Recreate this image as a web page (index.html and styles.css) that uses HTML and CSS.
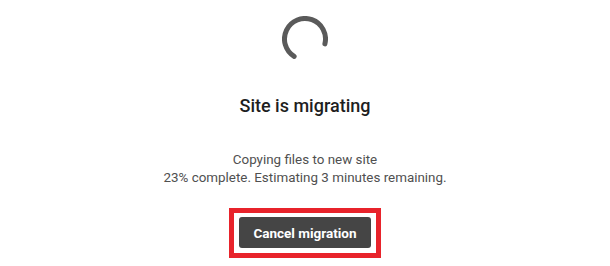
FILE: index.html
```html
<!DOCTYPE html>
<html>
<head>
<meta charset="utf-8">
<link rel="stylesheet" href="styles.css">
</head>
<body>
<main class="migration">
  <svg class="spinner" width="46" height="46" viewBox="0 0 46 46">
    <path d="M42.9 27.9 A20.5 20.5 0 1 0 12.14 40.39" fill="none" stroke="#5a5a5a" stroke-width="5" stroke-linecap="round"/>
  </svg>
  <h1 class="title">Site is migrating</h1>
  <p class="status">Copying files to new site<br>23% complete. Estimating 3 minutes remaining.</p>
  <div class="focus-ring">
    <button class="cancel">Cancel migration</button>
  </div>
</main>
</body>
</html>
```

FILE: styles.css
```css
html, body {
  margin: 0;
  padding: 0;
  background: #ffffff;
}

.migration {
  display: flex;
  flex-direction: column;
  align-items: center;
  font-family: Roboto, "Noto Sans", sans-serif;
  padding-top: 16px;
}

.spinner {
  display: block;
}

.title {
  margin: 33px 0 0 0;
  font-size: 18px;
  line-height: 22px;
  font-weight: 500;
  color: #1e1e1e;
}

.status {
  margin: 34px 0 0 0;
  font-size: 13.4px;
  line-height: 18px;
  color: #505050;
  text-align: center;
}

.focus-ring {
  margin-top: 21px;
  border: 5px solid #e8232b;
  padding: 4px 5px 5px 5px;
  display: flex;
}

.cancel {
  display: block;
  width: 132px;
  height: 31px;
  border: none;
  border-radius: 3px;
  background: #454545;
  color: #ffffff;
  font-family: Roboto, "Noto Sans", sans-serif;
  font-size: 13.5px;
  font-weight: 700;
  padding: 0;
}
```
